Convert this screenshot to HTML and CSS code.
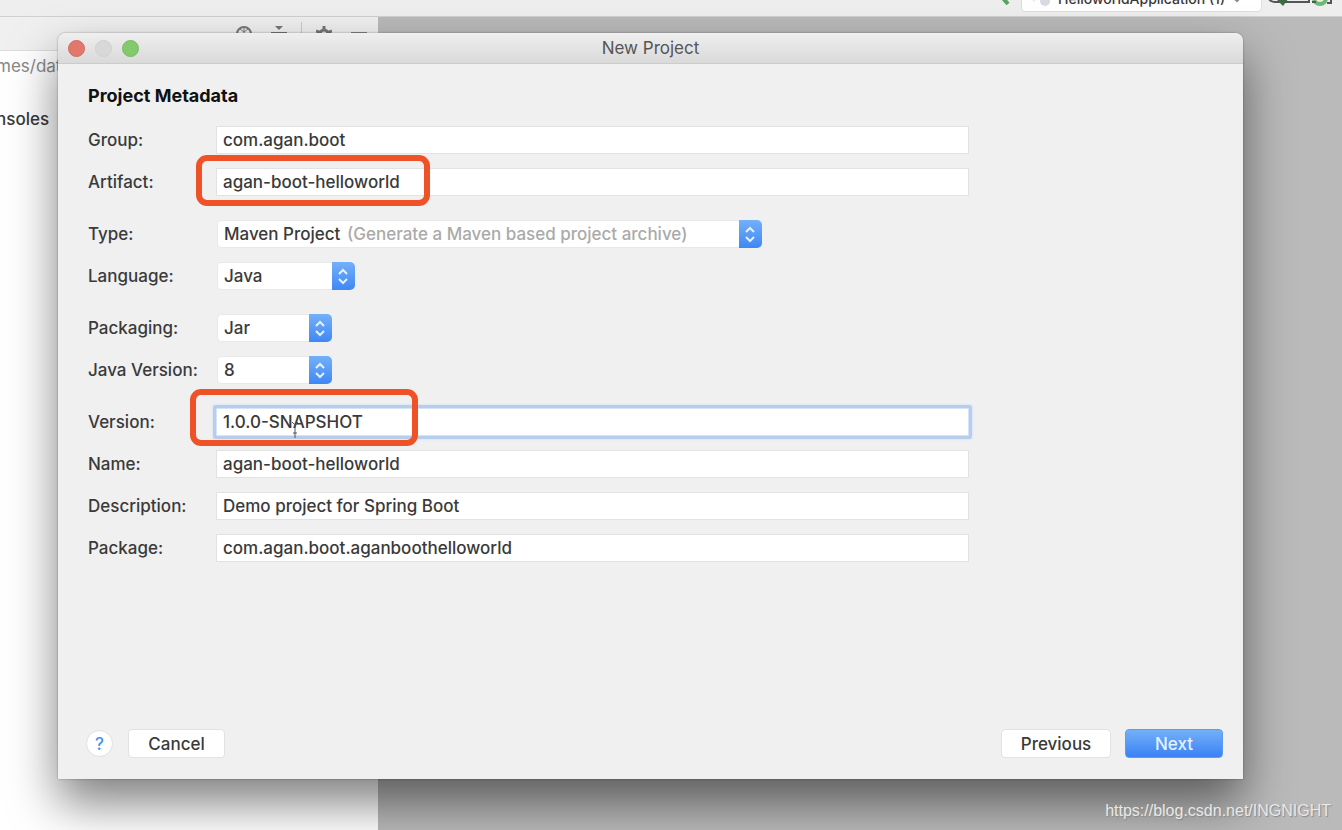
FILE: index.html
```
<!DOCTYPE html>
<html lang="en">

<head>
    <meta charset="utf-8">
    <title>New Project</title>
    <link rel="stylesheet" href="styles.css">
</head>

<body>
    <div class="ide">
        <header class="toolbar">
            <svg class="build-icon" width="20" height="20" viewBox="0 0 20 20">
                <path d="M8 8l7 8" stroke="#5aa364" stroke-width="4" />
            </svg>
            <button class="run-config" type="button">
                <svg width="22" height="22" viewBox="0 0 22 22">
                    <path d="M2 8l5 4-4 3z" fill="#dfeeda" />
                    <circle cx="15" cy="14" r="5" fill="#d9dbe2" />
                </svg>
                <span>HelloworldApplication (1)</span>
                <svg width="12" height="22" viewBox="0 0 12 22">
                    <path d="M3 11l3 3 3-3" fill="none" stroke="#888" stroke-width="2" />
                </svg>
            </button>
            <svg class="run-icons" width="68" height="20" viewBox="0 0 68 20">
                <path d="M1 9q1 6 7 6h34V7" fill="none" stroke="#555" stroke-width="2" />
                <path d="M8 11h14l-6 8z" fill="#3c6b42" />
                <circle cx="53" cy="11" r="6" fill="none" stroke="#6db872" stroke-width="4" />
                <path d="M45 15h4M60 16h4V8" fill="none" stroke="#555" stroke-width="2" />
            </svg>
        </header>
        <div class="workspace">
            <aside class="sidebar">
                <div class="sidebar-header">
                    <svg width="16" height="16" viewBox="0 0 16 16">
                        <circle cx="8" cy="8" r="7" fill="none" stroke="#777" stroke-width="2" />
                        <path d="M8 2v5M4 3l4 3 4-3" fill="none" stroke="#777" stroke-width="1" />
                    </svg>
                    <svg width="16" height="16" viewBox="0 0 16 16">
                        <path d="M4 0h8L8 4z" fill="#777" />
                        <path d="M0 7h16" stroke="#777" stroke-width="2" />
                    </svg>
                    <span class="divider"></span>
                    <svg width="16" height="16" viewBox="0 0 16 16">
                        <path d="M8 0v16M0 5l16 6M16 5L0 11" stroke="#777" stroke-width="3" />
                        <circle cx="8" cy="8" r="4" fill="#f0f0f0" stroke="#777" stroke-width="3" />
                    </svg>
                    <svg width="16" height="16" viewBox="0 0 16 16">
                        <path d="M0 7h16" stroke="#888" stroke-width="2" />
                    </svg>
                </div>
                <p class="tree-path">mes/data</p>
                <p class="tree-item">nsoles</p>
            </aside>
            <div class="editor"></div>
        </div>
    </div>

    <main class="dialog">
        <div class="titlebar">
            <div class="lights">
                <button class="light red" type="button" aria-label="Close"></button>
                <button class="light gray" type="button" aria-label="Minimize"></button>
                <button class="light green" type="button" aria-label="Zoom"></button>
            </div>
            <span class="title">New Project</span>
        </div>

        <form class="content">
            <h1>Project Metadata</h1>
            <div class="group">
                <div class="row">
                    <label for="group">Group:</label>
                    <div class="field"><input id="group" type="text" value="com.agan.boot"></div>
                </div>
                <div class="row">
                    <label for="artifact">Artifact:</label>
                    <div class="field">
                        <input id="artifact" type="text" value="agan-boot-helloworld">
                        <span class="mark mark-artifact"></span>
                    </div>
                </div>
            </div>
            <div class="group">
                <div class="row">
                    <label for="type">Type:</label>
                    <div class="select wide">
                        <select id="type">
                            <option>Maven Project</option>
                        </select>
                        <span class="hint">(Generate a Maven based project archive)</span>
                        <svg class="arrows" width="23" height="28" viewBox="0 0 23 28">
                            <path d="M7 12l4-4 4 4M7 17l4 4 4-4" />
                        </svg>
                    </div>
                </div>
                <div class="row">
                    <label for="language">Language:</label>
                    <div class="select medium">
                        <select id="language">
                            <option>Java</option>
                        </select>
                        <svg class="arrows" width="23" height="28" viewBox="0 0 23 28">
                            <path d="M7 12l4-4 4 4M7 17l4 4 4-4" />
                        </svg>
                    </div>
                </div>
            </div>
            <div class="group">
                <div class="row">
                    <label for="packaging">Packaging:</label>
                    <div class="select small">
                        <select id="packaging">
                            <option>Jar</option>
                        </select>
                        <svg class="arrows" width="23" height="28" viewBox="0 0 23 28">
                            <path d="M7 12l4-4 4 4M7 17l4 4 4-4" />
                        </svg>
                    </div>
                </div>
                <div class="row">
                    <label for="java-version">Java Version:</label>
                    <div class="select small">
                        <select id="java-version">
                            <option>8</option>
                        </select>
                        <svg class="arrows" width="23" height="28" viewBox="0 0 23 28">
                            <path d="M7 12l4-4 4 4M7 17l4 4 4-4" />
                        </svg>
                    </div>
                </div>
            </div>
            <div class="group">
                <div class="row">
                    <label for="version">Version:</label>
                    <div class="field">
                        <input id="version" class="focused" type="text" value="1.0.0-SNAPSHOT">
                        <svg class="cursor" width="8" height="18" viewBox="0 0 8 18">
                            <path d="M1 1l3 3 3-3M4 4v13M2 12h4" fill="none" stroke="#555" />
                        </svg>
                        <span class="mark mark-version"></span>
                    </div>
                </div>
                <div class="row">
                    <label for="name">Name:</label>
                    <div class="field"><input id="name" type="text" value="agan-boot-helloworld"></div>
                </div>
                <div class="row">
                    <label for="description">Description:</label>
                    <div class="field"><input id="description" type="text" value="Demo project for Spring Boot"></div>
                </div>
                <div class="row">
                    <label for="package">Package:</label>
                    <div class="field"><input id="package" type="text" value="com.agan.boot.aganboothelloworld"></div>
                </div>
            </div>
        </form>

        <footer class="actions">
            <button class="help" type="button">?</button>
            <button class="btn cancel" type="button">Cancel</button>
            <button class="btn previous" type="button">Previous</button>
            <button class="btn next" type="button">Next</button>
        </footer>
    </main>

    <span class="watermark">https://blog.csdn.net/INGNIGHT</span>
</body>

</html>
```
FILE: styles.css
```
* {
    box-sizing: border-box;
}

body {
    margin: 0;
    height: 100vh;
    overflow: hidden;
    position: relative;
    font-family: Inter, "Liberation Sans", sans-serif;
    font-size: 17px;
    font-weight: 500;
    color: #3a3a3a;
}

button,
input,
select {
    font: inherit;
    color: inherit;
}

/* window behind the dialog */
.ide {
    height: 100%;
    display: flex;
    flex-direction: column;
}

.toolbar {
    height: 17px;
    flex: none;
    display: flex;
    align-items: flex-end;
    justify-content: flex-end;
    overflow: hidden;
    padding-right: 7px;
    background: #eee;
    border-bottom: 1px solid #d0d0d0;
}

.build-icon {
    margin-right: 8px;
    margin-bottom: 8px;
}

.run-config {
    display: flex;
    align-items: center;
    gap: 6px;
    width: 241px;
    height: 28px;
    margin-bottom: 4px;
    padding: 0 8px;
    border: 1px solid #ddd;
    border-radius: 4px;
    background: #fff;
    font-size: 14px;
    white-space: nowrap;
}

.run-config svg {
    flex: none;
}

.run-icons {
    margin-left: 5px;
    margin-bottom: 9px;
}

.workspace {
    flex: 1;
    display: flex;
}

.sidebar {
    width: 378px;
    background: #fff;
    overflow: hidden;
}

.sidebar-header {
    height: 34px;
    display: flex;
    align-items: center;
    justify-content: flex-end;
    gap: 19px;
    padding: 0 11px;
    background: #f0f0f0;
    border-bottom: 1px solid #ddd;
}

.divider {
    width: 1px;
    height: 24px;
    margin: 0 -5px;
    background: #ccc;
}

.tree-path,
.tree-item {
    margin: 0 0 0 -4px;
    line-height: 30px;
}

.tree-path {
    color: #888;
    font-weight: 400;
}

.tree-item {
    margin-top: 23px;
}

.editor {
    flex: 1;
    background: #bababa;
}

/* dialog */
.dialog {
    position: absolute;
    top: 33px;
    right: 99px;
    bottom: 51px;
    left: 58px;
    display: flex;
    flex-direction: column;
    background: #f0f0f0;
    border-radius: 8px 8px 0 0;
    box-shadow: 0 0 2px rgba(0, 0, 0, 0.4), 0 24px 48px rgba(0, 0, 0, 0.5);
}

.titlebar {
    height: 31px;
    display: flex;
    align-items: center;
    padding: 0 10px;
    border-bottom: 1px solid #ccc;
    border-radius: 8px 8px 0 0;
    background: linear-gradient(#efefef, #d9d9d9);
}

.lights {
    display: flex;
    gap: 10px;
    width: 80px;
}

.light {
    width: 17px;
    height: 17px;
    padding: 0;
    border: 1px solid #d0d0d0;
    border-radius: 50%;
    background: #d8d8d8;
}

.light.red {
    background: #e2786c;
    border-color: #d4695f;
}

.light.green {
    background: #82ca6a;
    border-color: #74bb5e;
}

.title {
    flex: 1;
    padding-right: 80px;
    text-align: center;
    font-weight: 400;
    color: #555;
}

.content {
    flex: 1;
    padding: 20px 274px 0 30px;
}

h1 {
    margin: 0 0 18px;
    font-size: 18px;
    line-height: 24px;
    color: #111;
}

.group {
    display: flex;
    flex-direction: column;
    gap: 14px;
    margin-bottom: 24px;
}

.row {
    display: flex;
    align-items: center;
    height: 28px;
}

.row label {
    flex: none;
    width: 128px;
    white-space: nowrap;
}

.field {
    flex: 1;
    position: relative;
    display: flex;
}

.field input {
    width: 100%;
    height: 28px;
    padding: 0 6px;
    border: 1px solid #e2e2e2;
    border-radius: 0;
    background: #fff;
    outline: none;
}

.field .focused {
    border-color: #d5e3f6;
    border-radius: 1px;
    box-shadow: 0 0 0 3px #b6cdeb, 0 0 2px 4px #dce7f6;
}

.select {
    position: relative;
    display: flex;
    margin-left: 1px;
}

.select select {
    width: 100%;
    height: 28px;
    padding: 0 6px;
    appearance: none;
    border: 1px solid #e8e8e8;
    border-radius: 4px;
    background: #fff;
    outline: none;
}

.wide {
    width: 545px;
}

.medium {
    width: 138px;
}

.small {
    width: 115px;
}

.hint {
    position: absolute;
    left: 130px;
    line-height: 28px;
    color: #aaa;
    white-space: nowrap;
    pointer-events: none;
}

.arrows {
    position: absolute;
    top: 0;
    right: 0;
    border-radius: 0 5px 5px 0;
    background: linear-gradient(#74b0f8, #3f87f5);
    pointer-events: none;
}

.arrows path {
    fill: none;
    stroke: #e6f1ff;
    stroke-width: 2;
}

.cursor {
    position: absolute;
    left: 75px;
    top: 13px;
}

/* red highlight boxes */
.mark {
    position: absolute;
    border: 6px solid #f05228;
    border-radius: 11px;
    pointer-events: none;
}

.mark-artifact {
    left: -20px;
    top: -13px;
    width: 234px;
    height: 51px;
}

.mark-version {
    left: -26px;
    top: -19px;
    width: 228px;
    height: 57px;
}

.actions {
    display: flex;
    align-items: center;
    padding: 0 20px 21px 28px;
}

.btn {
    height: 29px;
    padding: 0;
    border: 1px solid #e2e2e2;
    border-radius: 4px;
    background: #fff;
}

.help {
    width: 27px;
    height: 27px;
    margin-right: 15px;
    padding: 0;
    border: 1px solid #e0e0e0;
    border-radius: 50%;
    background: #fff;
    color: #4a90e8;
}

.cancel {
    width: 97px;
}

.previous {
    width: 110px;
    margin-left: auto;
}

.next {
    width: 98px;
    margin-left: 14px;
    border-color: #5a9bf6;
    background: linear-gradient(#74b0f8, #3a82f5);
    color: #e6f1ff;
}

.watermark {
    position: absolute;
    right: 11px;
    bottom: 9px;
    font-family: "Liberation Sans", sans-serif;
    font-size: 16px;
    font-weight: 400;
    line-height: 20px;
    color: #e8e8e8;
    text-shadow: 1px 1px 1px #888;
}
```
